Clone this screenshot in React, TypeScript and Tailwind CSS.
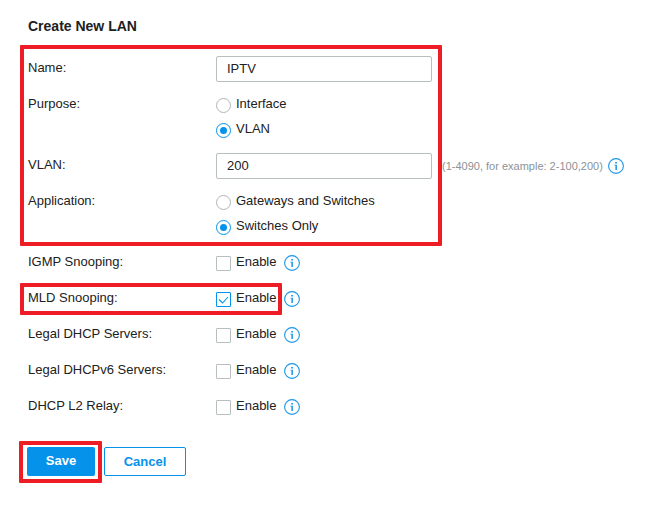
import type { ReactNode } from "react";

const toggles = [
  { id: "igmp", label: "IGMP Snooping:", checked: false, marked: false },
  { id: "mld", label: "MLD Snooping:", checked: true, marked: true },
  { id: "dhcp", label: "Legal DHCP Servers:", checked: false, marked: false },
  { id: "dhcpv6", label: "Legal DHCPv6 Servers:", checked: false, marked: false },
  { id: "relay", label: "DHCP L2 Relay:", checked: false, marked: false },
];

const inputClass =
  "h-[26px] w-[216px] shrink-0 rounded-[2px] border border-[#b9bec1] bg-white px-[10px] pb-px text-[13px] text-[#212121] outline-none focus:border-[#0492eb]";

function InfoButton({ label }: { label: string }) {
  return (
    <button type="button" aria-label={label} className="shrink-0 cursor-pointer text-[#1a96e8]">
      <svg viewBox="0 0 16 16" className="block size-4" fill="none">
        <circle cx="8" cy="8" r="7.4" stroke="currentColor" strokeWidth="1.1" />
        <path d="M7.2 4h1.7v1.6H7.2zM6.4 6.8h2.5V12H7.4V7.6h-1z" fill="currentColor" />
      </svg>
    </button>
  );
}

function Row({ label, htmlFor, children }: { label: string; htmlFor: string; children: ReactNode }) {
  return (
    <div className="flex h-[25px] items-center">
      <label htmlFor={htmlFor} className="w-[188px] shrink-0 pb-px">
        {label}
      </label>
      {children}
    </div>
  );
}

function RadioRow({ label, name, options, selected }: { label: string; name: string; options: string[]; selected: string }) {
  return (
    <div role="radiogroup" aria-label={label} className="flex">
      <div className="flex h-[25px] w-[188px] shrink-0 items-center pb-px">{label}</div>
      <div>
        {options.map((option) => (
          <label key={option} className="flex h-[25px] w-fit items-center gap-[5px]">
            <span className="grid pt-px">
              <input
                type="radio"
                name={name}
                defaultChecked={option === selected}
                className="peer col-start-1 row-start-1 size-[15px] appearance-none rounded-full border border-[#b0b5b8] bg-white checked:border-[#0492eb]"
              />
              <span className="pointer-events-none col-start-1 row-start-1 hidden size-[7px] place-self-center rounded-full bg-[#0492eb] peer-checked:block" />
            </span>
            <span className="pb-px">{option}</span>
          </label>
        ))}
      </div>
    </div>
  );
}

// red frame around the settings that matter for this step
function Highlight({ className }: { className: string }) {
  return <div className={`pointer-events-none absolute rounded-[1px] border-4 border-[#ee1c25] ${className}`} />;
}

export default function App() {
  return (
    <form
      className="min-h-screen bg-white px-7 pt-[18px] pb-8 font-['Liberation_Sans',Arial,sans-serif] text-[13px] leading-4 text-[#212121]"
      onSubmit={(e) => e.preventDefault()}
    >
      <h1 className="text-[14px] font-bold">Create New LAN</h1>

      <div className="mt-[22px] flex flex-col gap-[11px]">
        <div className="relative flex flex-col gap-[11px]">
          <Row label="Name:" htmlFor="name">
            <input id="name" type="text" defaultValue="IPTV" className={inputClass} />
          </Row>
          <RadioRow label="Purpose:" name="purpose" options={["Interface", "VLAN"]} selected="VLAN" />
          <Row label="VLAN:" htmlFor="vlan">
            <input id="vlan" type="text" defaultValue="200" className={inputClass} />
            <span className="mr-[5px] ml-[10px] text-[11px] whitespace-nowrap text-[#8c9296]">
              (1-4090, for example: 2-100,200)
            </span>
            <InfoButton label="About VLAN" />
          </Row>
          <RadioRow
            label="Application:"
            name="application"
            options={["Gateways and Switches", "Switches Only"]}
            selected="Switches Only"
          />
          <Highlight className="-top-[11px] -bottom-[7px] -left-2 w-[422px]" />
        </div>

        {toggles.map((item) => (
          <div key={item.id} className="relative">
            <Row label={item.label} htmlFor={item.id}>
              <label className="mr-2 flex items-center gap-[5px]">
                <span className="grid pt-px">
                  <input
                    id={item.id}
                    type="checkbox"
                    defaultChecked={item.checked}
                    className="peer col-start-1 row-start-1 size-[15px] appearance-none rounded-[1px] border border-[#b9bec1] bg-white checked:border-[#0492eb]"
                  />
                  <svg
                    viewBox="0 0 15 15"
                    className="pointer-events-none col-start-1 row-start-1 hidden size-[15px] peer-checked:block"
                    fill="none"
                  >
                    <path d="M3 7.5l3.5 3.5 5.5-6" stroke="#0492eb" strokeWidth="1.1" />
                  </svg>
                </span>
                <span className="pb-px">Enable</span>
              </label>
              <InfoButton label={`About ${item.label}`} />
            </Row>
            {item.marked && <Highlight className="-top-[3px] -bottom-1 -left-2 w-[262px]" />}
          </div>
        ))}
      </div>

      <div className="mt-7 -ml-px flex gap-[9px]">
        <div className="relative">
          <button
            type="submit"
            className="block h-[29px] w-[68px] cursor-pointer rounded-[2px] bg-[#0492eb] pb-px text-[13px] font-bold text-white"
          >
            Save
          </button>
          <Highlight className="-top-[6px] -right-[7px] -bottom-[7px] -left-2" />
        </div>
        <button
          type="button"
          className="h-[29px] w-[82px] cursor-pointer rounded-[2px] border border-[#0492eb] bg-white text-[13px] font-bold text-[#0492eb]"
        >
          Cancel
        </button>
      </div>
    </form>
  );
}
